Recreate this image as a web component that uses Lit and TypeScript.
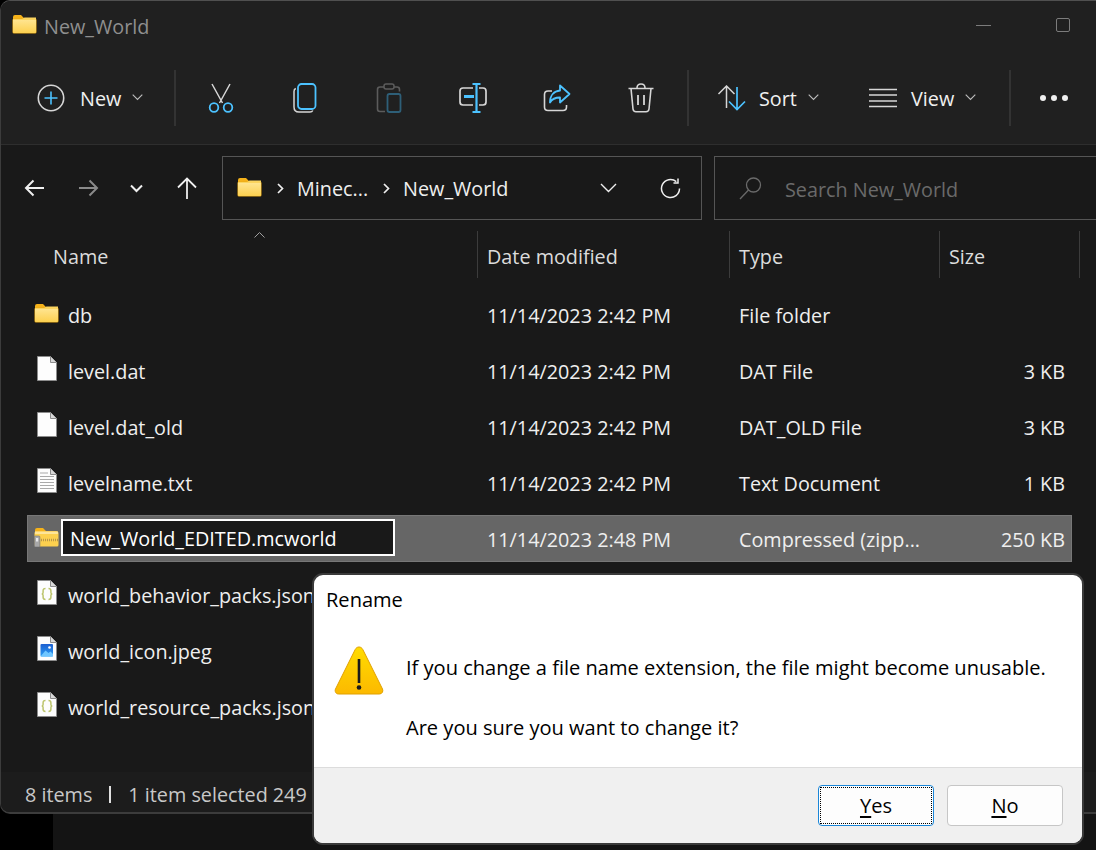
import { LitElement, html, css, svg } from "lit";
import { customElement } from "lit/decorators.js";

const BLUE = "#4cc2ff";

const folderSvg = (w: number, h: number) => html`<svg class="ico" width=${w} height=${h} viewBox="0 0 25 20">
  <path d="M1 3a2 2 0 0 1 2-2h6l3 3h10a2 2 0 0 1 2 2v2H1z" fill="#f5b21a"/>
  <rect x="0.5" y="4.5" width="24" height="15" rx="1.5" fill="#e9a916"/>
  <rect x="1" y="5" width="23" height="14" rx="1" fill="url(#fg)"/>
  <path d="M1 5h9l2.5-1.500H24V6H1z" fill="#fbd45e"/>
  <defs><linearGradient id="fg" x1="0" y1="0" x2="0" y2="1"><stop offset="0" stop-color="#ffe694"/><stop offset="1" stop-color="#fcd04f"/></linearGradient></defs>
</svg>`;

const pageSvg = (inner: unknown = "") => html`<svg class="ico" width="22" height="27" viewBox="0 0 22 27">
  <path d="M1.500 1.500h13l6 6v18h-19z" fill="#fdfdfd" stroke="#8c8c8c" stroke-width="1"/>
  <path d="M14.500 1.500v6h6" fill="#d8d8d8" stroke="#8c8c8c" stroke-width="1"/>
  ${inner}
</svg>`;

const icons: Record<string, unknown> = {
  plus: html`<svg width="28" height="28" viewBox="0 0 28 28" fill="none"><circle cx="14" cy="14" r="12.700" stroke="#d6d6d6" stroke-width="1.600"/><path d="M14 7.500v13M7.500 14h13" stroke="${BLUE}" stroke-width="1.600"/></svg>`,
  cut: html`<svg width="26" height="30" viewBox="0 0 26 30" fill="none"><path d="M4 1l10.500 19M22 1L11.500 20" stroke="#d6d6d6" stroke-width="1.500"/><circle cx="6" cy="24.500" r="4.300" stroke="${BLUE}" stroke-width="1.800"/><circle cx="20" cy="24.500" r="4.300" stroke="${BLUE}" stroke-width="1.800"/></svg>`,
  copy: html`<svg width="24" height="30" viewBox="0 0 24 30" fill="none"><path d="M2.800 5.500C1.500 6 1 7 1 8.500V24c0 3 2 5 5 5h11c1.300 0 2.300-.5 2.800-1.500" stroke="#d6d6d6" stroke-width="1.500"/><rect x="5" y="1" width="17.500" height="25" rx="3.500" stroke="${BLUE}" stroke-width="1.800"/></svg>`,
  paste: html`<svg width="26" height="30" viewBox="0 0 26 30" fill="none"><path d="M8 4H4C2.500 4 1.500 5 1.500 6.500V26c0 1.500 1 2.500 2.500 2.500h5M18 4h3c1.500 0 2.500 1 2.500 2.500v2" stroke="#5c5c5c" stroke-width="1.600"/><rect x="8" y="1" width="10" height="5" rx="2" stroke="#5c5c5c" stroke-width="1.500"/><rect x="11.500" y="11" width="13" height="18" rx="2" stroke="#2e5f78" stroke-width="1.800"/></svg>`,
  rename: html`<svg width="28" height="30" viewBox="0 0 28 30" fill="none"><path d="M14 5H4C2.300 5 1 6.300 1 8v11c0 1.700 1.300 3 3 3h10M20 5h4c1.700 0 3 1.300 3 3v11c0 1.700-1.300 3-3 3h-4" stroke="#d6d6d6" stroke-width="1.700"/><path d="M5 13.500h10" stroke="${BLUE}" stroke-width="3"/><path d="M13.500 1h8M17.500 1v28M13.500 29h8" stroke="${BLUE}" stroke-width="2.200"/></svg>`,
  share: html`<svg width="28" height="28" viewBox="0 0 28 28" fill="none"><path d="M9 7H5C2.800 7 1.500 8.500 1.500 10.500V23c0 2 1.300 3.500 3.500 3.500h15c2 0 3.500-1.500 3.500-3.500v-2" stroke="#d6d6d6" stroke-width="1.600"/><path d="M17 1.500l9.500 8.500-9.500 8.500v-5c-5 0-8 1.500-10 5 0-7 4-11.500 10-12z" stroke="${BLUE}" stroke-width="1.800" stroke-linejoin="round"/></svg>`,
  trash: html`<svg width="26" height="30" viewBox="0 0 26 30" fill="none" stroke="#d6d6d6" stroke-width="1.600"><path d="M.5 5.500h25M3 5.500L5 26c.2 1.700 1.200 2.700 3 2.700h10c1.800 0 2.800-1 3-2.700l2-20.500"/><path d="M9 5c0-2.500 1.500-4 4-4s4 1.500 4 4"/><path d="M10 12v10M16 12v10" stroke-width="1.800"/></svg>`,
  sort: html`<svg width="29" height="26" viewBox="0 0 29 26" fill="none"><path d="M1.500 9L9.500 1l8 8M9.500 1.500V23" stroke="#d6d6d6" stroke-width="1.500"/><path d="M20 2v22M12 16.500l8 8 8-8" stroke="${BLUE}" stroke-width="1.700"/></svg>`,
  view: html`<svg width="28" height="20" viewBox="0 0 28 20" fill="none" stroke="#d6d6d6" stroke-width="1.500"><path d="M0 1.500h28M0 7h28M0 13h28M0 18.500h28"/></svg>`,
};

const chev = html`<svg class="chev" width="11" height="7" viewBox="0 0 11 7" fill="none"><path d="M.7.7l4.800 4.800L10.300.7" stroke="#bdbdbd" stroke-width="1.100"/></svg>`;

const zipIcon = html`<svg class="ico" width="25" height="20" viewBox="0 0 25 20">
  <path d="M1 3a2 2 0 0 1 2-2h6l3 3h10a2 2 0 0 1 2 2v2H1z" fill="#f5b21a"/>
  <rect x="0.5" y="4.500" width="24" height="15" rx="1.500" fill="#fcd04f"/>
  <rect x="1" y="4.500" width="23" height="2.500" fill="#fde59a"/>
  <path d="M5 13h19" stroke="#b8964a" stroke-width="2.500" stroke-dasharray="1 1"/>
  <rect x=".4" y="9" width="5.500" height="11" rx="1" fill="#a8a8a8" stroke="#6e6e6e" stroke-width=".6"/>
  <rect x="2" y="11" width="2.200" height="3.500" fill="#e8e8e8"/>
</svg>`;

const jsonIcon = pageSvg(svg`<path d="M9.500 9.500c-1.800 0-2.400.6-2.400 2.200v1.800c0 1-.5 1.500-1.400 1.500.9 0 1.400.5 1.400 1.500v1.800c0 1.600.6 2.200 2.400 2.200M12.500 9.500c1.800 0 2.400.6 2.400 2.200v1.800c0 1 .5 1.500 1.400 1.500-.9 0-1.400.5-1.400 1.500v1.800c0 1.600-.6 2.200-2.400 2.200" fill="none" stroke="#bcc46c" stroke-width="1.500"/>`);
const textIcon = pageSvg(svg`<path d="M4 6h8M4 9.500h14M4 12.500h14M4 15.500h14M4 18.500h14M4 21.500h14" stroke="#a9a9a9" stroke-width="1.100"/>`);
const imgIcon = pageSvg(svg`<defs><linearGradient id="ig" x1="0" y1="0" x2="0" y2="1"><stop offset="0" stop-color="#1d5fd0"/><stop offset="1" stop-color="#2a9df4"/></linearGradient></defs><rect x="4.500" y="9" width="12.500" height="12.500" rx="1" fill="url(#ig)"/><path d="M4.500 21.500l5-6 3 2.500 2-1.500 2.500 2.500v2.500z" fill="#6fc6ff"/><circle cx="13.500" cy="12.500" r="1.300" fill="#fff"/>`);

interface Row { name: string; date: string; type: string; size: string; icon: unknown; }
const rows: Row[] = [
  { name: "db", date: "11/14/2023 2:42 PM", type: "File folder", size: "", icon: folderSvg(25, 20) },
  { name: "level.dat", date: "11/14/2023 2:42 PM", type: "DAT File", size: "3 KB", icon: pageSvg() },
  { name: "level.dat_old", date: "11/14/2023 2:42 PM", type: "DAT_OLD File", size: "3 KB", icon: pageSvg() },
  { name: "levelname.txt", date: "11/14/2023 2:42 PM", type: "Text Document", size: "1 KB", icon: textIcon },
  { name: "New_World_EDITED.mcworld", date: "11/14/2023 2:48 PM", type: "Compressed (zipp...", size: "250 KB", icon: zipIcon },
  { name: "world_behavior_packs.json", date: "", type: "", size: "", icon: jsonIcon },
  { name: "world_icon.jpeg", date: "", type: "", size: "", icon: imgIcon },
  { name: "world_resource_packs.json", date: "", type: "", size: "", icon: jsonIcon },
];

@customElement("app-root")
export class AppRoot extends LitElement {
  static styles = css`
    :host { display: block; width: 1096px; height: 850px; position: relative; overflow: hidden; background: #000; font-family: "Open Sans", "Noto Sans", sans-serif; font-size: 19.8px; color: #efefef; }
    .desk { position: absolute; inset: 814px 0 0 53px; background: #141414; }
    .win { height: 814px; background: #191919; border-radius: 10px 0 0 10px; border: solid #3c3c3c; border-width: 1px 0 2px 1px; border-top-color: #505050; box-sizing: border-box; display: flex; flex-direction: column; overflow: hidden; position: relative; }
    .top { background: #202020; height: 143px; flex: none; border-bottom: 1px solid #2e2e2e; }
    .title { height: 50px; display: flex; align-items: center; padding-left: 11px; gap: 7px; color: #8f8f8f; }
    .title .ico { margin-top: -4px; }
    .wc { margin-left: auto; display: flex; align-items: center; padding-right: 26px; margin-top: -2px; }
    .min { width: 15px; height: 1px; background: #7c7c7c; margin-right: 65px; }
    .max { width: 12px; height: 12px; border: 1.5px solid #7c7c7c; border-radius: 2px; }
    .tools { height: 56px; margin-top: 19px; display: flex; align-items: center; }
    .new { display: flex; align-items: center; width: 173px; padding-left: 36px; box-sizing: border-box; flex: none; }
    .new svg:first-child { margin-right: 15px; }
    .lbl { color: #f0f0f0; }
    .chev { margin-left: 11px; margin-top: -2px; }
    .sep { width: 2px; height: 56px; background: #333; flex: none; }
    .ib { width: 84px; display: flex; justify-content: center; align-items: center; flex: none; }
    .ibs { display: flex; padding-left: 3px; width: 511px; box-sizing: border-box; flex: none; }
    .sort { display: flex; align-items: center; padding-left: 28px; width: 180px; box-sizing: border-box; flex: none; }
    .sort svg:first-child { margin-right: 13px; }
    .sview { display: flex; align-items: center; width: 140px; box-sizing: border-box; flex: none; }
    .sview svg:first-child { margin-right: 14px; }
    .dots { display: flex; gap: 5px; margin-left: 29px; }
    .dots i { width: 6px; height: 6px; border-radius: 50%; background: #f0f0f0; display: block; }
    .nav { padding: 11px 0; flex: none; display: flex; align-items: center; }
    .arrows { width: 221px; flex: none; display: flex; align-items: center; }
    .arrows span { display: flex; justify-content: center; flex: none; }
    .a1 { width: 66px; } .a2 { width: 42px; } .a3 { width: 54px; } .a4 { width: 48px; }
    .addr { width: 480px; height: 64px; border: 1px solid #555; box-sizing: border-box; display: flex; align-items: center; padding-left: 14px; flex: none; color: #efefef; }
    .addr .ico { margin-top: -3px; }
    .addr .gt { margin: 0 13px 0 15px; display: flex; }
    .addr .r { margin-left: auto; display: flex; align-items: center; gap: 43px; padding-right: 20px; }
    .search { margin-left: 12px; flex: 1; height: 64px; border: 1px solid #555; border-right: 0; box-sizing: border-box; display: flex; align-items: center; padding-left: 24px; gap: 23px; color: #6a6a6a; }
    .search span { margin-top: 3px; }
    .cols { display: grid; grid-template-columns: 477px 252px 210px 140px 1fr; }
    .hdr { height: 47px; flex: none; position: relative; }
    .hdr div { padding-left: 9px; border-right: 1px solid #3c3c3c; display: flex; align-items: center; box-sizing: border-box; padding-top: 4px; color: #dcdcdc; }
    .hdr div:nth-child(2) { padding-left: 52px; }
    .hdr div:nth-child(6) { border: 0; }
    .caret { position: absolute; left: 253px; top: 1px; }
    .list { margin-top: 13px; flex: 1; }
    .row { height: 47px; margin-bottom: 9px; margin-left: 26px; width: 1045px; align-items: center; grid-template-columns: 450px 252px 210px 1fr; }
    .row > div { padding-left: 10px; padding-top: 2px; white-space: nowrap; }
    .row .nm { padding-left: 7px; display: flex; align-items: center; position: relative; }
    .row .slot { width: 25px; height: 28px; padding-bottom: 6px; display: flex; align-items: center; justify-content: center; margin-right: 9px; flex: none; }
    .row .sz { text-align: right; padding-right: 7px; }
    .row.sel { background: #666; box-shadow: inset 0 0 0 1px #777; }
    .edit { position: absolute; left: 34px; top: calc(50% - 20px); width: 334px; height: 37px; background: #191919; border: 2px solid #fff; box-sizing: border-box; padding: 2px 0 0 7px; display: flex; align-items: center; color: #fff; }
    .status { height: 36px; padding-top: 4px; flex: none; background: #1c1c1c; display: flex; align-items: center; padding-left: 24px; color: #c8c8c8; }
    .status .bar { width: 2px; height: 17px; background: #e0e0e0; margin: 0 17px; }
    .status .gap { margin-left: 5px; }
    .dlg { position: absolute; left: 312px; top: 573px; width: 772px; height: 272px; border: 2px solid #3a3a3a; border-radius: 11px; box-sizing: border-box; background: #fff; color: #000; display: flex; flex-direction: column; overflow: hidden; font-size: 20.06px; }
    .dt { height: 48px; padding: 0 0 0 12px; display: flex; align-items: center; flex: none; }
    .db { flex: 1; display: grid; grid-template-columns: 72px 1fr; padding-left: 20px; }
    .db svg { margin-top: 22px; }
    .msg { padding-top: 31px; display: flex; flex-direction: column; gap: 33px; line-height: 27px; }
    .df { height: 76px; flex: none; background: #f0f0f0; border-top: 1px solid #dcdcdc; box-sizing: border-box; display: flex; justify-content: flex-end; align-items: center; gap: 13px; padding-right: 19px; }
    .btn { width: 116px; height: 41px; background: #fdfdfd; border: 1px solid #c6c6c6; border-radius: 4px; box-sizing: border-box; display: flex; align-items: center; justify-content: center; color: #000; position: relative; }
    .btn.def { border: 1px solid #1a86d8; }
    .btn.def::after { content: ""; position: absolute; inset: 1px; border: 1px dotted #000; }
    u { text-underline-offset: 3px; }
  `;

  render() {
    return html`
      <div class="desk"></div>
      <div class="win">
        <div class="top">
          <div class="title">${folderSvg(25, 20)}<span>New_World</span>
            <div class="wc"><div class="min"></div><div class="max"></div></div>
          </div>
          <div class="tools">
            <div class="new">${icons.plus}<span class="lbl">New</span>${chev}</div>
            <div class="sep"></div>
            <div class="ibs">
              <div class="ib">${icons.cut}</div><div class="ib">${icons.copy}</div><div class="ib">${icons.paste}</div>
              <div class="ib">${icons.rename}</div><div class="ib">${icons.share}</div><div class="ib">${icons.trash}</div>
            </div>
            <div class="sep"></div>
            <div class="sort">${icons.sort}<span class="lbl">Sort</span>${chev}</div>
            <div class="sview">${icons.view}<span class="lbl">View</span>${chev}</div>
            <div class="sep"></div>
            <div class="dots"><i></i><i></i><i></i></div>
          </div>
        </div>
        <div class="nav">
          <div class="arrows">
            <span class="a1"><svg width="21" height="18" viewBox="0 0 21 18" fill="none" stroke="#efefef" stroke-width="2"><path d="M20 9H2M9.500 1.500L2 9l7.500 7.500"/></svg></span>
            <span class="a2"><svg width="21" height="18" viewBox="0 0 21 18" fill="none" stroke="#8a8a8a" stroke-width="2"><path d="M1 9h18M11.500 1.500L19 9l-7.500 7.500"/></svg></span>
            <span class="a3"><svg width="13" height="9" viewBox="0 0 13 9" fill="none" stroke="#efefef" stroke-width="2"><path d="M1 1.500l5.500 5.500L12 1.500"/></svg></span>
            <span class="a4"><svg width="20" height="22" viewBox="0 0 20 22" fill="none" stroke="#efefef" stroke-width="1.800"><path d="M10 22V2M1 10.500L10 1.500l9 9"/></svg></span>
          </div>
          <div class="addr">
            ${folderSvg(25, 20)}
            <span class="gt"><svg width="7" height="11" viewBox="0 0 7 11" fill="none" stroke="#efefef" stroke-width="1.700"><path d="M1 1l4.500 4.500L1 10"/></svg></span>
            <span>Minec...</span>
            <span class="gt"><svg width="7" height="11" viewBox="0 0 7 11" fill="none" stroke="#efefef" stroke-width="1.700"><path d="M1 1l4.500 4.500L1 10"/></svg></span>
            <span>New_World</span>
            <div class="r">
              <svg width="17" height="10" viewBox="0 0 17 10" fill="none" stroke="#efefef" stroke-width="1.400"><path d="M1 1l7.500 7.500L16 1"/></svg>
              <svg width="21" height="21" viewBox="0 0 21 21" fill="none" stroke="#efefef" stroke-width="1.500"><path d="M19.500 10.500a9 9 0 1 1-3.200-6.900"/><path d="M18 .5v4.500h-4.500"/></svg>
            </div>
          </div>
          <div class="search">
            <svg width="23" height="23" viewBox="0 0 23 23" fill="none" stroke="#6a6a6a" stroke-width="1.300"><circle cx="14.500" cy="8" r="7"/><path d="M9.500 13L1 22"/></svg>
            <span>Search New_World</span>
          </div>
        </div>
        <div class="hdr cols">
          <svg class="caret" width="11" height="6" viewBox="0 0 11 6" fill="none" stroke="#a0a0a0" stroke-width="1"><path d="M.5 5.500l5-5 5 5"/></svg>
          <div>Name</div><div>Date modified</div><div>Type</div><div>Size</div><div></div>
        </div>
        <div class="list">
          ${rows.map((r, i) => html`
            <div class="row cols ${i === 4 ? "sel" : ""}">
              <div class="nm"><span class="slot">${r.icon}</span>
                ${i === 4 ? html`<div class="edit">${r.name}</div>` : html`<span>${r.name}</span>`}
              </div>
              <div>${r.date}</div><div>${r.type}</div><div class="sz">${r.size}</div>
            </div>`)}
        </div>
        <div class="status"><span>8 items</span><span class="bar"></span><span>1 item selected</span><span class="gap">249</span></div>
      </div>
      <div class="dlg">
        <div class="dt">Rename</div>
        <div class="db">
          <svg width="50" height="50" viewBox="0 0 50 50">
            <defs><linearGradient id="wg" x1="0" y1="0" x2="0" y2="1"><stop offset="0" stop-color="#ffdc00"/><stop offset="1" stop-color="#fcb900"/></linearGradient></defs>
            <path d="M25 2c1.800 0 3 1 3.800 2.500L48.500 44c1 2.300-.3 5-3 5H4.500c-2.700 0-4-2.700-3-5L21.200 4.500C22 3 23.200 2 25 2z" fill="url(#wg)" stroke="#e0a000" stroke-width="1"/>
            <path d="M25 14v24" stroke="#1a1a1a" stroke-width="2.600"/><circle cx="25" cy="42.500" r="2.300" fill="#1a1a1a"/>
          </svg>
          <div class="msg"><span>If you change a file name extension, the file might become unusable.</span><span>Are you sure you want to change it?</span></div>
        </div>
        <div class="df">
          <div class="btn def"><span><u>Y</u>es</span></div>
          <div class="btn"><span><u>N</u>o</span></div>
        </div>
      </div>`;
  }
}
